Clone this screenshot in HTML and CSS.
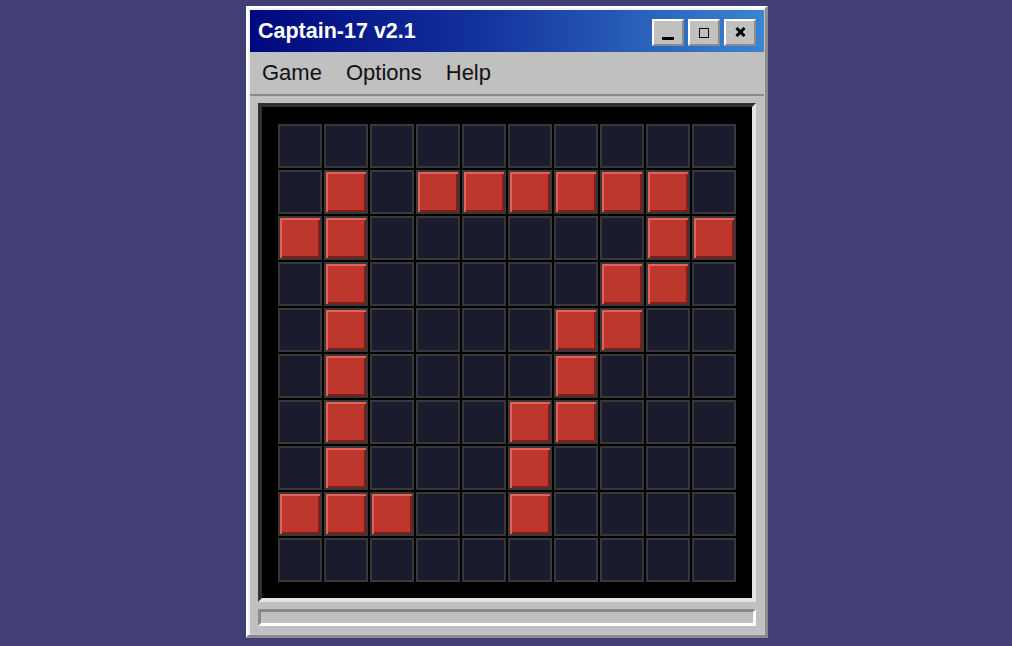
FILE: index.html
```html
<!DOCTYPE html>
<html>
<head>
<meta charset="utf-8">
<link rel="stylesheet" href="styles.css">
</head>
<body>
<div class="desktop">
  <div class="window">
    <div class="titlebar">
      <span class="title">Captain-17 v2.1</span>
      <div class="controls">
        <button class="tbtn"><span class="min-bar"></span></button>
        <button class="tbtn"><span class="max-box"></span></button>
        <button class="tbtn">
          <svg width="11" height="10" viewBox="0 0 11 10"><path d="M1.5 1 L9.5 9 M9.5 1 L1.5 9" stroke="#000" stroke-width="3"/></svg>
        </button>
      </div>
    </div>
    <div class="menubar">
      <span class="menu-item">Game</span>
      <span class="menu-item">Options</span>
      <span class="menu-item">Help</span>
    </div>
    <div class="body">
      <div class="board">
        <div class="grid" id="grid"></div>
      </div>
      <div class="status"></div>
    </div>
  </div>
</div>
<script src="app.js"></script>
</body>
</html>
```
FILE: app.js
```js
var reds = [
  [],
  [1,3,4,5,6,7,8],
  [0,1,8,9],
  [1,7,8],
  [1,6,7],
  [1,6],
  [1,5,6],
  [1,5],
  [0,1,2,5],
  []
];
var grid = document.getElementById('grid');
for (var r = 0; r < 10; r++) {
  for (var c = 0; c < 10; c++) {
    var d = document.createElement('div');
    d.className = 'cell' + (reds[r].indexOf(c) >= 0 ? ' hit' : '');
    grid.appendChild(d);
  }
}
```
FILE: styles.css
```css
html, body {
  margin: 0;
  padding: 0;
  background: #423f78;
  height: 100%;
}
.desktop {
  display: flex;
  justify-content: center;
  padding-top: 6px;
  padding-left: 2px;
}
.window {
  width: 522px;
  box-sizing: border-box;
  background: #c0c0c0;
  border-style: solid;
  border-width: 2px 3px 3px 2px;
  border-color: #ffffff #8a8a8a #8a8a8a #ffffff;
  box-shadow: inset 2px 2px #f2f2f2, inset -2px -2px #c4c4c4;
  padding: 2px 1px 9px 2px;
  font-family: "Liberation Sans", Arial, sans-serif;
}
.titlebar {
  height: 42px;
  background: linear-gradient(to right, #00077e 0%, #13329c 45%, #3a84d2 100%);
  display: flex;
  align-items: center;
  justify-content: space-between;
  padding: 0 8px;
}
.title {
  color: #fff;
  font-weight: bold;
  font-size: 21.5px;
}
.controls {
  display: flex;
  gap: 4px;
  margin-top: 2px;
}
.tbtn {
  width: 32px;
  height: 27px;
  box-sizing: border-box;
  background: #c0c0c0;
  border-style: solid;
  border-width: 2px;
  border-color: #ffffff #8a8a8a #8a8a8a #ffffff;
  padding: 0;
  display: flex;
  align-items: center;
  justify-content: center;
}
.min-bar {
  width: 12px;
  height: 3px;
  background: #000;
  margin-top: 12px;
}
.max-box {
  width: 8px;
  height: 8px;
  border: 1.5px solid #111;
  margin-top: 2px;
}
.menubar {
  height: 42px;
  display: flex;
  align-items: center;
  padding-left: 12px;
  gap: 24px;
  border-bottom: 2px solid #8a8a8a;
}
.menu-item {
  font-size: 22px;
  color: #111;
}
.body {
  padding: 7px 8px 0 8px;
  display: flex;
  flex-direction: column;
  gap: 7px;
}
.board {
  border-style: solid;
  border-width: 4px;
  border-color: #303030 #e4e4e4 #e4e4e4 #303030;
  background: #000;
  padding: 17px 16px 16px 16px;
}
.grid {
  display: grid;
  grid-template-columns: repeat(10, 44px);
  grid-auto-rows: 44px;
  gap: 2px;
}
.cell {
  box-sizing: border-box;
  border: 2px solid #383838;
  background: #1b1b2e;
}
.cell.hit {
  background: #bd372d;
  box-shadow: inset 2px 2px #e2625a, inset -2px -2px #7e2019;
}
.status {
  height: 17px;
  box-sizing: border-box;
  border-style: solid;
  border-width: 3px;
  border-color: #8a8a8a #ffffff #ffffff #8a8a8a;
  background: #c0c0c0;
}
```
